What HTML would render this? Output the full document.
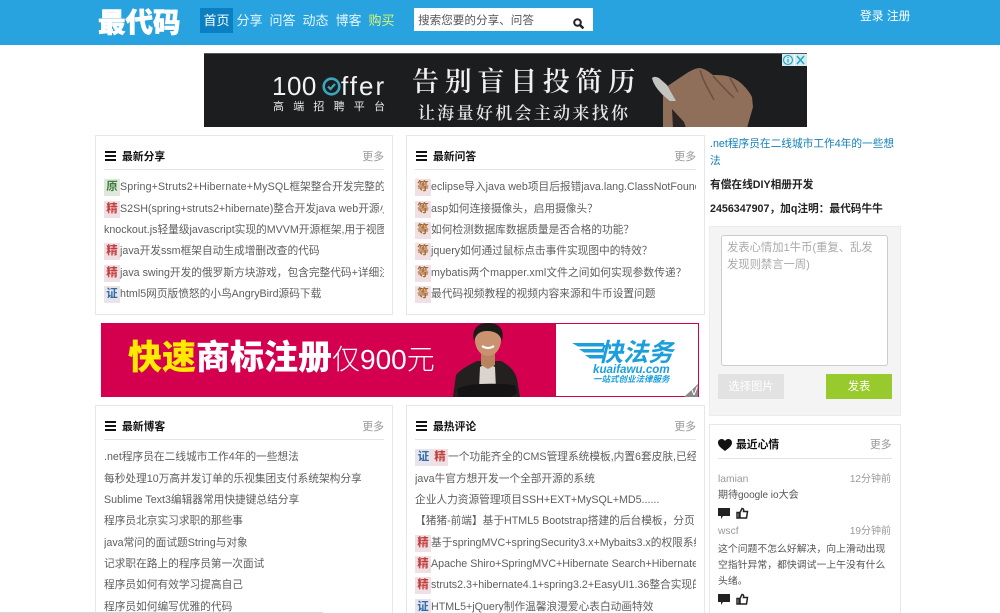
<!DOCTYPE html>
<html lang="zh">
<head>
<meta charset="utf-8">
<title>最代码</title>
<style>
*{box-sizing:border-box;margin:0;padding:0}
html,body{width:1000px;height:613px;overflow:hidden;background:#fff}
body{position:relative;font:12px/21.33px "Liberation Sans","Noto Sans CJK SC",sans-serif;color:#5e5e5e}
.a{position:absolute;white-space:nowrap}
#top{position:absolute;left:0;top:0;width:1000px;height:45px;background:#29a3df}
.nav{position:absolute;top:8px;height:25px;line-height:26px;font-size:13px;color:#e6f5fc;text-align:center;width:33px}
.box{position:absolute;width:299px;border:1px solid #e7e7e7;background:#fff}
.h{position:absolute;left:8px;right:8px;top:0;height:34px;border-bottom:1px solid #e3e3e3}
.h b{position:absolute;left:18px;top:11px;line-height:20px;font-size:10.8px;color:#111}
.h i{position:absolute;right:0;top:11px;line-height:20px;font-style:normal;font-size:10.8px;color:#999}
.ham{position:absolute;left:1px;top:15px;width:11px;height:10px;border-top:2px solid #111;border-bottom:2px solid #111}
.ham:after{content:"";position:absolute;left:0;top:2px;width:11px;height:2px;background:#111}
ul{position:absolute;left:8px;right:8px;top:41.3px;list-style:none;overflow:hidden}
li{height:21.33px;line-height:21.33px;white-space:nowrap;overflow:hidden;font-size:10.7px}
s{text-decoration:none;display:inline-block;height:17px;line-height:17px;width:16px;text-align:center;font-weight:bold;font-size:11.5px;vertical-align:top;margin-top:2px}
.y{background:#dfe8da;color:#3f7d3f}
.j{background:#f0dfe3;color:#c23b3b}
.d{background:#f0e0e5;color:#a86a2c}
.z{background:#e9e3ec;color:#2f6da8}
.note{position:absolute;left:710px;font-size:10.7px}
</style>
</head>
<body>
<div id="top"></div>
<div class="a" style="left:98px;top:7px;font-size:27.500px;line-height:32px;font-weight:900;color:#fff;-webkit-text-stroke:.6px #fff">最代码</div>
<div class="nav" style="left:200px;background:#0a7fc1;color:#fff">首页</div>
<div class="nav" style="left:233px">分享</div>
<div class="nav" style="left:266px">问答</div>
<div class="nav" style="left:299px">动态</div>
<div class="nav" style="left:332px">博客</div>
<div class="nav" style="left:365px;color:#d9f76a">购买</div>
<div class="a" style="left:414px;top:8px;width:179px;height:23px;background:#fff;color:#555;font-size:11.6px;line-height:25px;padding-left:4px">搜索您要的分享、问答</div>
<svg class="a" style="left:572px;top:17px" width="13" height="13" viewBox="0 0 13 13"><circle cx="5.500" cy="5.500" r="3.300" fill="none" stroke="#222" stroke-width="2"/><path d="M8 8l3.400 3.400" stroke="#222" stroke-width="2.400"/></svg>
<div class="a" style="left:860px;top:6px;line-height:21px;font-size:11.8px;color:#fff">登录 注册</div>

<!-- ad 1 -->
<div class="a" style="left:204px;top:53px;width:603px;height:74px;background:#1c1d1f;border-top:1px solid #555;overflow:hidden">
<svg class="a" style="left:0;top:0" width="603" height="74" viewBox="0 0 603 74">
<path d="M459 74L459 43C460 37 462 33 465 31L483 19C488 16 492 14 496 14C502 15 506 19 509 21C515 21 521 21 526 23C532 25 536 28 539 31C543 35 546 39 548 43L549 53L543 74Z" fill="#8f6e5a"/>
<path d="M448 24C450 22 453 23 455 24L463 31L472 47L466 47C458 41 450 33 448 24Z" fill="#c4c4bf"/>
<path d="M469 74L468 55L480 68L482 74Z" fill="#2a2422"/>
<path d="M496 16C500 30 506 38 510 46M509 22C516 30 524 38 530 44M526 24L534 38" stroke="#6b5040" stroke-width="1.500" fill="none"/>
</svg>
<div class="a" style="left:68px;top:17px;font-size:26px;line-height:30px;color:#f2f2f2;letter-spacing:.5px">100</div>
<svg class="a" style="left:118px;top:23px" width="19" height="19" viewBox="0 0 19 19"><circle cx="9.500" cy="9.500" r="7.800" fill="none" stroke="#3ba6bd" stroke-width="2.600"/><path d="M6 9.500l2.500 2.500 4.500-5" fill="none" stroke="#3ba6bd" stroke-width="2.200"/></svg>
<div class="a" style="left:137px;top:17px;font-size:26px;line-height:30px;color:#f2f2f2;letter-spacing:2px">ffer</div>
<div class="a" style="left:69px;top:45px;font-size:11px;line-height:16px;color:#e6e6e6;letter-spacing:9.200px">高端招聘平台</div>
<div class="a" style="left:208px;top:8px;font-family:'Noto Serif CJK SC','Liberation Serif',serif;font-weight:600;font-size:27px;line-height:36px;color:#f1f1f1;letter-spacing:5.700px">告别盲目投简历</div>
<div class="a" style="left:214px;top:46px;font-family:'Noto Serif CJK SC','Liberation Serif',serif;font-weight:600;font-size:17px;line-height:24px;color:#e8e8e8;letter-spacing:2.300px">让海量好机会主动来找你</div>
<svg class="a" style="left:578px;top:0" width="25" height="12" viewBox="0 0 25 12"><rect width="25" height="12" fill="#d4ebf0"/><circle cx="6" cy="6" r="4.500" fill="none" stroke="#1fa3c4" stroke-width="1.100"/><path d="M6 5v3.500M6 3v1" stroke="#1fa3c4" stroke-width="1.200"/><path d="M15 2l7 8M22 2l-7 8" stroke="#1fa3c4" stroke-width="1.400"/><path d="M12.500 0v12" stroke="#fff"/></svg>
</div>

<!-- share -->
<div class="box" style="left:95px;top:135px;height:180px;width:298px">
<div class="h"><span class="ham"></span><b>最新分享</b><i>更多</i></div>
<ul>
<li><s class="y">原</s><span style="letter-spacing:.13px">Spring+Struts2+Hibernate+MySQL</span>框架整合开发完整的java</li>
<li><s class="j">精</s>S2SH(spring+struts2+hibernate)整合开发java web开源小项目</li>
<li>knockout.js轻量级javascript实现的MVVM开源框架,用于视图模型</li>
<li><s class="j">精</s>java开发ssm框架自动生成增删改查的代码</li>
<li><s class="j">精</s>java swing开发的俄罗斯方块游戏，包含完整代码+详细注释</li>
<li><s class="z">证</s>html5网页版愤怒的小鸟AngryBird源码下载</li>
</ul>
</div>

<!-- questions -->
<div class="box" style="left:406px;top:135px;height:180px">
<div class="h"><span class="ham"></span><b>最新问答</b><i>更多</i></div>
<ul>
<li><s class="d">等</s>eclipse导入java web项目后报错java.lang.ClassNotFoundException</li>
<li><s class="d">等</s>asp如何连接摄像头，启用摄像头？</li>
<li><s class="d">等</s>如何检测数据库数据质量是否合格的功能？</li>
<li><s class="d">等</s>jquery如何通过鼠标点击事件实现图中的特效？</li>
<li style="letter-spacing:.1px"><s class="d">等</s>mybatis两个mapper.xml文件之间如何实现参数传递？</li>
<li><s class="d">等</s>最代码视频教程的视频内容来源和牛币设置问题</li>
</ul>
</div>

<!-- ad 2 -->
<div class="a" style="left:101px;top:323px;width:598px;height:74px;background:#d4004f;overflow:hidden">
<div class="a" style="left:455px;top:0;width:143px;height:74px;background:#fff;border:1px solid #d4004f;border-left:0"></div>
<div class="a" style="left:27px;top:14px;font-size:34px;line-height:42px;font-weight:900;color:#fff"><span style="color:#ffea00">快速</span>商标注册<span style="font-weight:300;font-size:28px">仅900元</span></div>
<svg class="a" style="left:340px;top:0" width="120" height="74" viewBox="0 0 120 74">
<path d="M12 74L15 52C20 46 28 42 36 38L60 38C68 42 74 48 76 56L79 74Z" fill="#23201f"/>
<path d="M39 44L46 40L54 44L55 66H38Z" fill="#d9d4cc"/>
<path d="M16 66C28 60 50 60 74 62L76 70L70 74H18Z" fill="#151313"/>
<path d="M40 30H54V42L47 46L40 42Z" fill="#b9835f"/>
<ellipse cx="47" cy="17" rx="13" ry="16" fill="#c9936f"/>
<path d="M33 18C30 5 38 0 47 0C57 0 64 5 61 18C59 11 54 8 46 8C39 8 35 11 33 18Z" fill="#1d1a1a"/>
<path d="M41 23Q47 27 53 23" stroke="#fff" stroke-width="2" fill="none"/>
</svg>
<svg class="a" style="left:471px;top:20px" width="32" height="20" viewBox="0 0 32 20"><path d="M0 0H32V3.500H6ZM7 6H32V9.500H12ZM13 12H31V15.500H18Z" fill="#1b9fdc"/></svg>
<div class="a" style="left:497px;top:14px;font-size:25px;line-height:32px;font-weight:bold;font-style:italic;color:#1b9fdc">快法务</div>
<div class="a" style="left:492px;top:40px;font-size:11.600px;line-height:14px;font-weight:bold;font-style:italic;color:#1b9fdc">kuaifawu.com</div>
<div class="a" style="left:492px;top:51px;font-size:8.500px;line-height:11px;font-weight:bold;font-style:italic;color:#1b9fdc">一站式创业法律服务</div>
<div class="a" style="left:583px;top:61px;width:0;height:0;border-left:14px solid transparent;border-bottom:13px solid #8a8a8a"></div>
<div class="a" style="left:589px;top:62px;font-size:12px;line-height:13px;color:#fff">V</div>
</div>

<!-- blogs -->
<div class="box" style="left:95px;top:405px;height:220px;width:298px">
<div class="h"><span class="ham"></span><b>最新博客</b><i>更多</i></div>
<ul>
<li>.net程序员在二线城市工作4年的一些想法</li>
<li>每秒处理10万高并发订单的乐视集团支付系统架构分享</li>
<li>Sublime Text3编辑器常用快捷键总结分享</li>
<li>程序员北京实习求职的那些事</li>
<li>java常问的面试题String与对象</li>
<li>记求职在路上的程序员第一次面试</li>
<li>程序员如何有效学习提高自己</li>
<li>程序员如何编写优雅的代码</li>
</ul>
</div>

<!-- comments -->
<div class="box" style="left:406px;top:405px;height:220px">
<div class="h"><span class="ham"></span><b>最热评论</b><i>更多</i></div>
<ul>
<li><s class="z" style="width:17px">证</s><s class="j" style="width:16px">精</s>一个功能齐全的CMS管理系统模板,内置6套皮肤,已经整合</li>
<li>java牛官方想开发一个全部开源的系统</li>
<li>企业人力资源管理项目SSH+EXT+MySQL+MD5......</li>
<li>【猪猪-前端】基于HTML5 Bootstrap搭建的后台模板，分页</li>
<li><s class="j">精</s>基于springMVC+springSecurity3.x+Mybaits3.x的权限系统</li>
<li><s class="j">精</s>Apache Shiro+SpringMVC+Hibernate Search+Hibernate</li>
<li><s class="j">精</s>struts2.3+hibernate4.1+spring3.2+EasyUI1.36整合实现的</li>
<li><s class="z">证</s>HTML5+jQuery制作温馨浪漫爱心表白动画特效</li>
</ul>
</div>

<!-- side -->
<div class="note" style="top:136px;width:187px;line-height:16.500px;color:#1480b8">.net程序员在二线城市工作4年的一些想法</div>
<div class="note" style="top:177px;line-height:16px;font-weight:bold;color:#222;white-space:nowrap">有偿在线DIY相册开发</div>
<div class="note" style="top:201px;line-height:16px;font-weight:bold;color:#222;white-space:nowrap">2456347907，加q注明：最代码牛牛</div>

<div class="a" style="left:709px;top:226px;width:192px;height:190px;background:#f4f4f4;border:1px solid #ececec"></div>
<div class="a" style="left:721px;top:235px;width:167px;height:131px;background:#fff;border:1px solid #ccc;border-radius:3px;padding:4px 5px;white-space:normal;line-height:17px;font-size:11.300px;color:#aaa">发表心情加1牛币(重复、乱发发现则禁言一周)</div>
<div class="a" style="left:718px;top:374px;width:66px;height:25px;line-height:27px;background:#e2e2e2;color:#fff;text-align:center;font-size:11.300px">选择图片</div>
<div class="a" style="left:826px;top:374px;width:66px;height:25px;line-height:27px;background:#98ca2d;color:#fff;text-align:center;font-size:11.300px">发表</div>

<div class="a" style="left:709px;top:424px;width:192px;height:200px;border:1px solid #e7e7e7;background:#fff"></div>
<div class="a" style="left:718px;top:458px;width:174px;height:1px;background:#e3e3e3"></div>
<svg class="a" style="left:718px;top:439px" width="14" height="12" viewBox="0 0 14 12"><path d="M7 12C3 9 0 6.800 0 3.600C0 1.500 1.700 0 3.600 0C5 0 6.300 .8 7 2C7.700 .8 9 0 10.400 0C12.300 0 14 1.500 14 3.600C14 6.800 11 9 7 12Z" fill="#111"/></svg>
<div class="a" style="left:736px;top:435px;line-height:20px;font-size:10.800px;font-weight:bold;color:#111">最近心情</div>
<div class="a" style="left:870px;top:435px;line-height:20px;font-size:10.800px;color:#999">更多</div>

<div class="a" style="left:718px;top:470px;line-height:20px;font-size:10.300px;color:#999">lamian</div>
<div class="a" style="left:791px;top:470px;width:100px;text-align:right;line-height:20px;font-size:10px;color:#999">12分钟前</div>
<div class="a" style="left:718px;top:486px;line-height:20px;font-size:10px;color:#555">期待google io大会</div>
<svg class="a" style="left:718px;top:507px" width="32" height="13" viewBox="0 0 32 13"><path d="M0 1H12V9H5L3 12V9H0Z" fill="#222"/><path d="M19 5.500H21V11H19ZM22 5.500L24 1.500C25.500 1.500 26 2.500 25.500 4.500H29.500L28.500 11H22Z" fill="none" stroke="#222" stroke-width="1.500"/></svg>

<div class="a" style="left:718px;top:522px;line-height:20px;font-size:10.300px;color:#999">wscf</div>
<div class="a" style="left:791px;top:522px;width:100px;text-align:right;line-height:20px;font-size:10px;color:#999">19分钟前</div>
<div class="a" style="left:718px;top:542px;width:171px;white-space:normal;line-height:16px;font-size:9.850px;color:#555">这个问题不怎么好解决，向上滑动出现空指针异常，都快调试一上午没有什么头绪。</div>
<svg class="a" style="left:718px;top:593px" width="32" height="13" viewBox="0 0 32 13"><path d="M0 1H12V9H5L3 12V9H0Z" fill="#222"/><path d="M19 5.500H21V11H19ZM22 5.500L24 1.500C25.500 1.500 26 2.500 25.500 4.500H29.500L28.500 11H22Z" fill="none" stroke="#222" stroke-width="1.500"/></svg>

<div class="a" style="left:0;top:612px;width:323px;height:1px;background:#d8d8d8"></div>
</body>
</html>
